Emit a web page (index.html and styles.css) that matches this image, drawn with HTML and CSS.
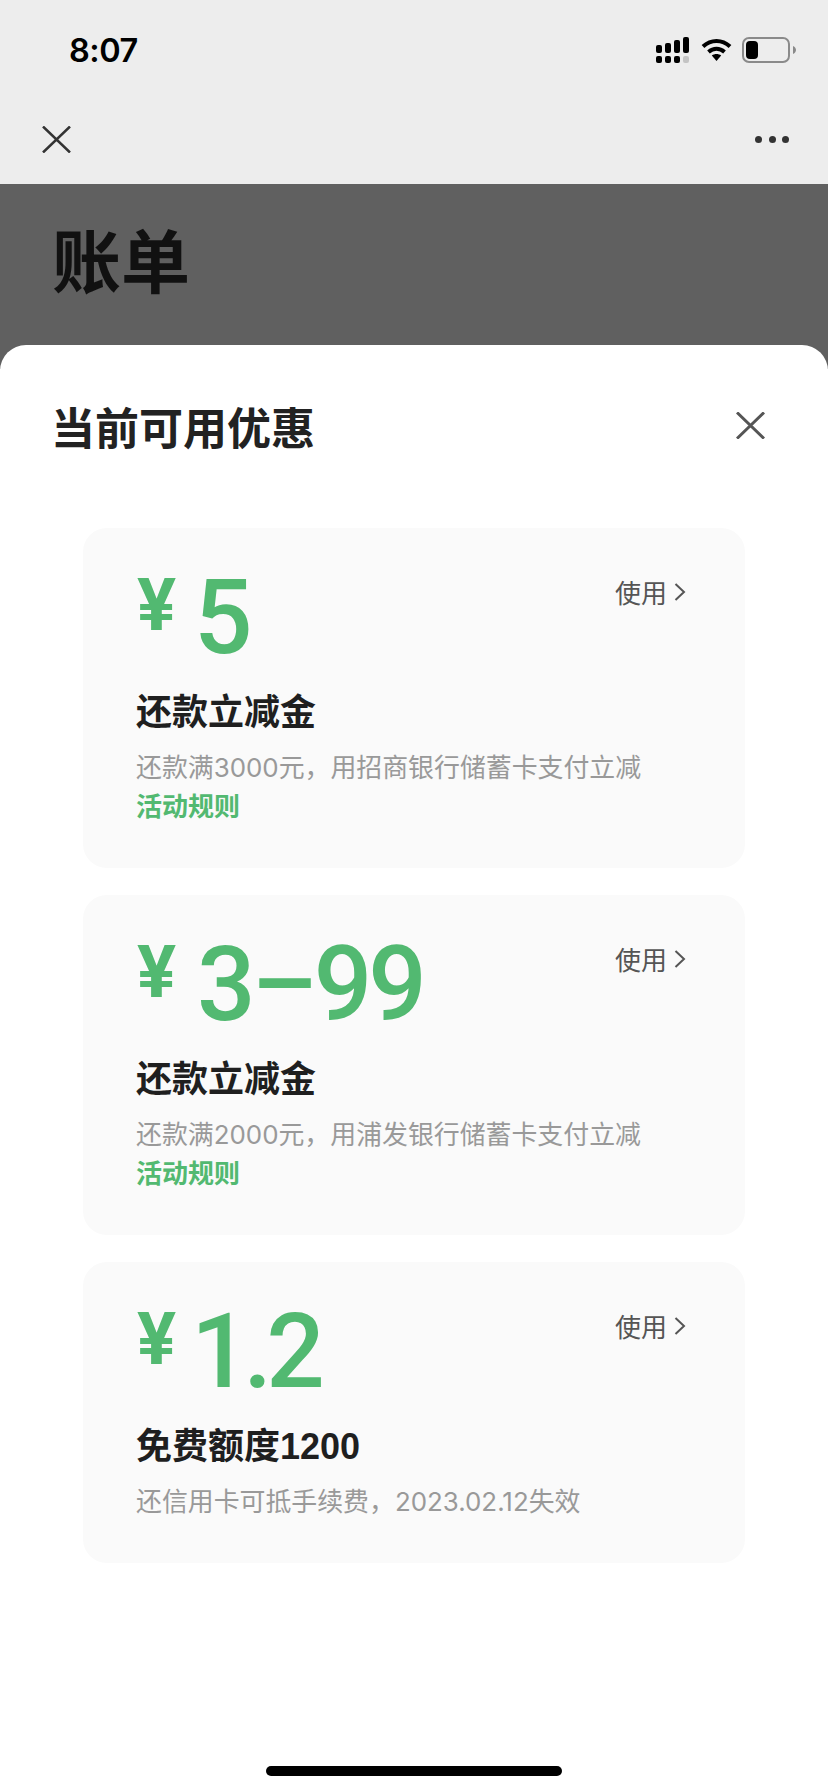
FILE: index.html
```html
<!DOCTYPE html>
<html lang="zh-CN">
<head>
<meta charset="utf-8">
<title>账单</title>
<link rel="stylesheet" href="styles.css">
</head>
<body>
<div class="page">
  <header class="top">
    <div class="status">
      <span class="time">8:07</span>
      <div class="status-icons">
        <svg class="signal" width="33" height="26" viewBox="0 0 33 26"><g fill="#000"><rect x="0" y="8" width="6" height="8" rx="2"/><rect x="9" y="6" width="6" height="10" rx="2"/><rect x="18" y="3" width="6" height="13" rx="2"/><rect x="27" y="0" width="6" height="16" rx="2"/><rect x="0" y="19" width="6" height="7" rx="2"/><rect x="9" y="19" width="6" height="7" rx="2"/><rect x="18" y="19" width="6" height="7" rx="2"/><rect x="27" y="19" width="6" height="7" rx="2" fill="#c4c4c4"/></g></svg>
        <svg class="wifi" width="31" height="23" viewBox="0 0 31 23"><g fill="none" stroke="#000" stroke-width="4"><path d="M2 8.500C10 1 21 1 29 8.500"/><path d="M7.500 14C12.300 9.800 18.700 9.800 23.500 14"/></g><path d="M10.800 17.500C13.500 15.500 17.500 15.500 20.200 17.500L15.500 23Z" fill="#000"/></svg>
        <svg class="battery" width="54" height="26" viewBox="0 0 54 26"><rect x="1" y="1" width="46" height="24" rx="6" fill="none" stroke="#8a8a8a" stroke-width="2"/><rect x="4" y="4" width="12" height="18" rx="4" fill="#000"/><path d="M51 9C53 10 54 11.500 54 13S53 16 51 17Z" fill="#8a8a8a"/></svg>
      </div>
    </div>
    <nav class="nav">
      <svg width="29" height="27" viewBox="0 0 29 27"><path d="M1 .5L28 26.500M28 .5L1 26.500" stroke="#333" stroke-width="2.500" fill="none"/></svg>
      <div class="dots"><i></i><i></i><i></i></div>
    </nav>
  </header>
  <section class="dim"><h1>账单</h1></section>
  <main class="sheet">
    <div class="sheet-head">
      <h2>当前可用优惠</h2>
      <svg width="29" height="27" viewBox="0 0 29 27"><path d="M1 .5L28 26.500M28 .5L1 26.500" stroke="#555" stroke-width="3" fill="none"/></svg>
    </div>
    <div class="cards">
      <article class="card">
        <div class="amount-row"><span class="yen">¥</span><span class="amount">5</span><a class="use">使用<svg width="12" height="20" viewBox="0 0 12 20"><path d="M1.500 2L10 10L1.500 18" stroke="#555" stroke-width="2" fill="none"/></svg></a></div>
        <h3>还款立减金</h3>
        <p class="desc">还款满3000元，用招商银行储蓄卡支付立减</p>
        <p class="rule">活动规则</p>
      </article>
      <article class="card">
        <div class="amount-row"><span class="yen">¥</span><span class="amount three">3–99</span><a class="use">使用<svg width="12" height="20" viewBox="0 0 12 20"><path d="M1.500 2L10 10L1.500 18" stroke="#555" stroke-width="2" fill="none"/></svg></a></div>
        <h3>还款立减金</h3>
        <p class="desc">还款满2000元，用浦发银行储蓄卡支付立减</p>
        <p class="rule">活动规则</p>
      </article>
      <article class="card last">
        <div class="amount-row"><span class="yen">¥</span><span class="amount one">1.2</span><a class="use">使用<svg width="12" height="20" viewBox="0 0 12 20"><path d="M1.500 2L10 10L1.500 18" stroke="#555" stroke-width="2" fill="none"/></svg></a></div>
        <h3>免费额度1200</h3>
        <p class="desc">还信用卡可抵手续费，2023.02.12失效</p>
      </article>
    </div>
    <div class="home-bar"></div>
  </main>
</div>
</body>
</html>
```
FILE: styles.css
```css
* { box-sizing: border-box; }
html, body { margin: 0; padding: 0; }
body { width: 828px; height: 1792px; overflow: hidden; background: #fff; font-family: Inter, "Noto Sans CJK SC", sans-serif; }
.page { display: flex; flex-direction: column; height: 1792px; }
.top { height: 184px; background: #ededed; display: flex; flex-direction: column; }
.status { height: 98px; padding: 33px 32px 0 69px; display: flex; justify-content: space-between; align-items: flex-start; }
.time { font: 600 32.5px/36px Inter, sans-serif; color: #000; letter-spacing: -0.5px; }
.status-icons { display: flex; align-items: flex-start; gap: 11px; padding-top: 4px; }
.wifi { margin: 1px 0 0 1px; }
.battery { margin-left: -1px; }
.nav { display: flex; justify-content: space-between; align-items: center; padding: 28px 39px 0 42px; }
.dots { display: flex; gap: 6.500px; }
.dots i { width: 7px; height: 7px; border-radius: 50%; background: #333; }
.dim { height: 185px; background: #606060; padding: 34px 0 0 52px; }
.dim h1 { margin: 0; font: 700 69px/80px "Noto Sans CJK SC", sans-serif; color: #111; }
.sheet { flex: 1; margin-top: -24px; background: #fff; border-radius: 26px 26px 0 0; display: flex; flex-direction: column; position: relative; }
.sheet-head { display: flex; justify-content: space-between; align-items: center; padding: 48px 63px 0 51px; height: 114px; }
.sheet-head h2 { margin: 0; font: 700 44px/56px "Noto Sans CJK SC", sans-serif; color: #222; }
.sheet-head svg { margin-top: -1px; }
.cards { display: flex; flex-direction: column; gap: 27px; padding: 69px 83px 0; }
.card { height: 340px; background: #fafafa; border-radius: 24px; padding: 32px 59px 0 53px; }
.card.last { height: 301px; }
.amount-row { display: flex; align-items: flex-start; height: 90px; }
.yen { margin-left: 1px; font: 700 73px/91px Roboto, sans-serif; color: #52b971; width: 57px; }
.amount { font: 500 103px/116px Roboto, sans-serif; color: #52b971; letter-spacing: -4px; }
.amount.three { margin-left: 3px; }
.amount.one { margin-left: -3px; letter-spacing: -6px; }
.use { margin-left: auto; padding-top: 12px; font: 400 26px/40px "Noto Sans CJK SC", sans-serif; color: #555; display: flex; align-items: center; gap: 7px; }
.card h3 { margin: 38px 0 0; font: 700 36px/50px "Liberation Sans", "Noto Sans CJK SC", sans-serif; color: #1f1f1f; }
.desc { margin: 10px 0 0; font: 400 25.9px/40px Inter, "Noto Sans CJK SC", sans-serif; color: #999; white-space: nowrap; }
.rule { margin: -3px 0 0; font: 700 26px/40px "Noto Sans CJK SC", sans-serif; color: #52b971; }
.home-bar { margin: auto 0 16px; align-self: center; width: 296px; height: 10px; border-radius: 5px; background: #000; }
```
